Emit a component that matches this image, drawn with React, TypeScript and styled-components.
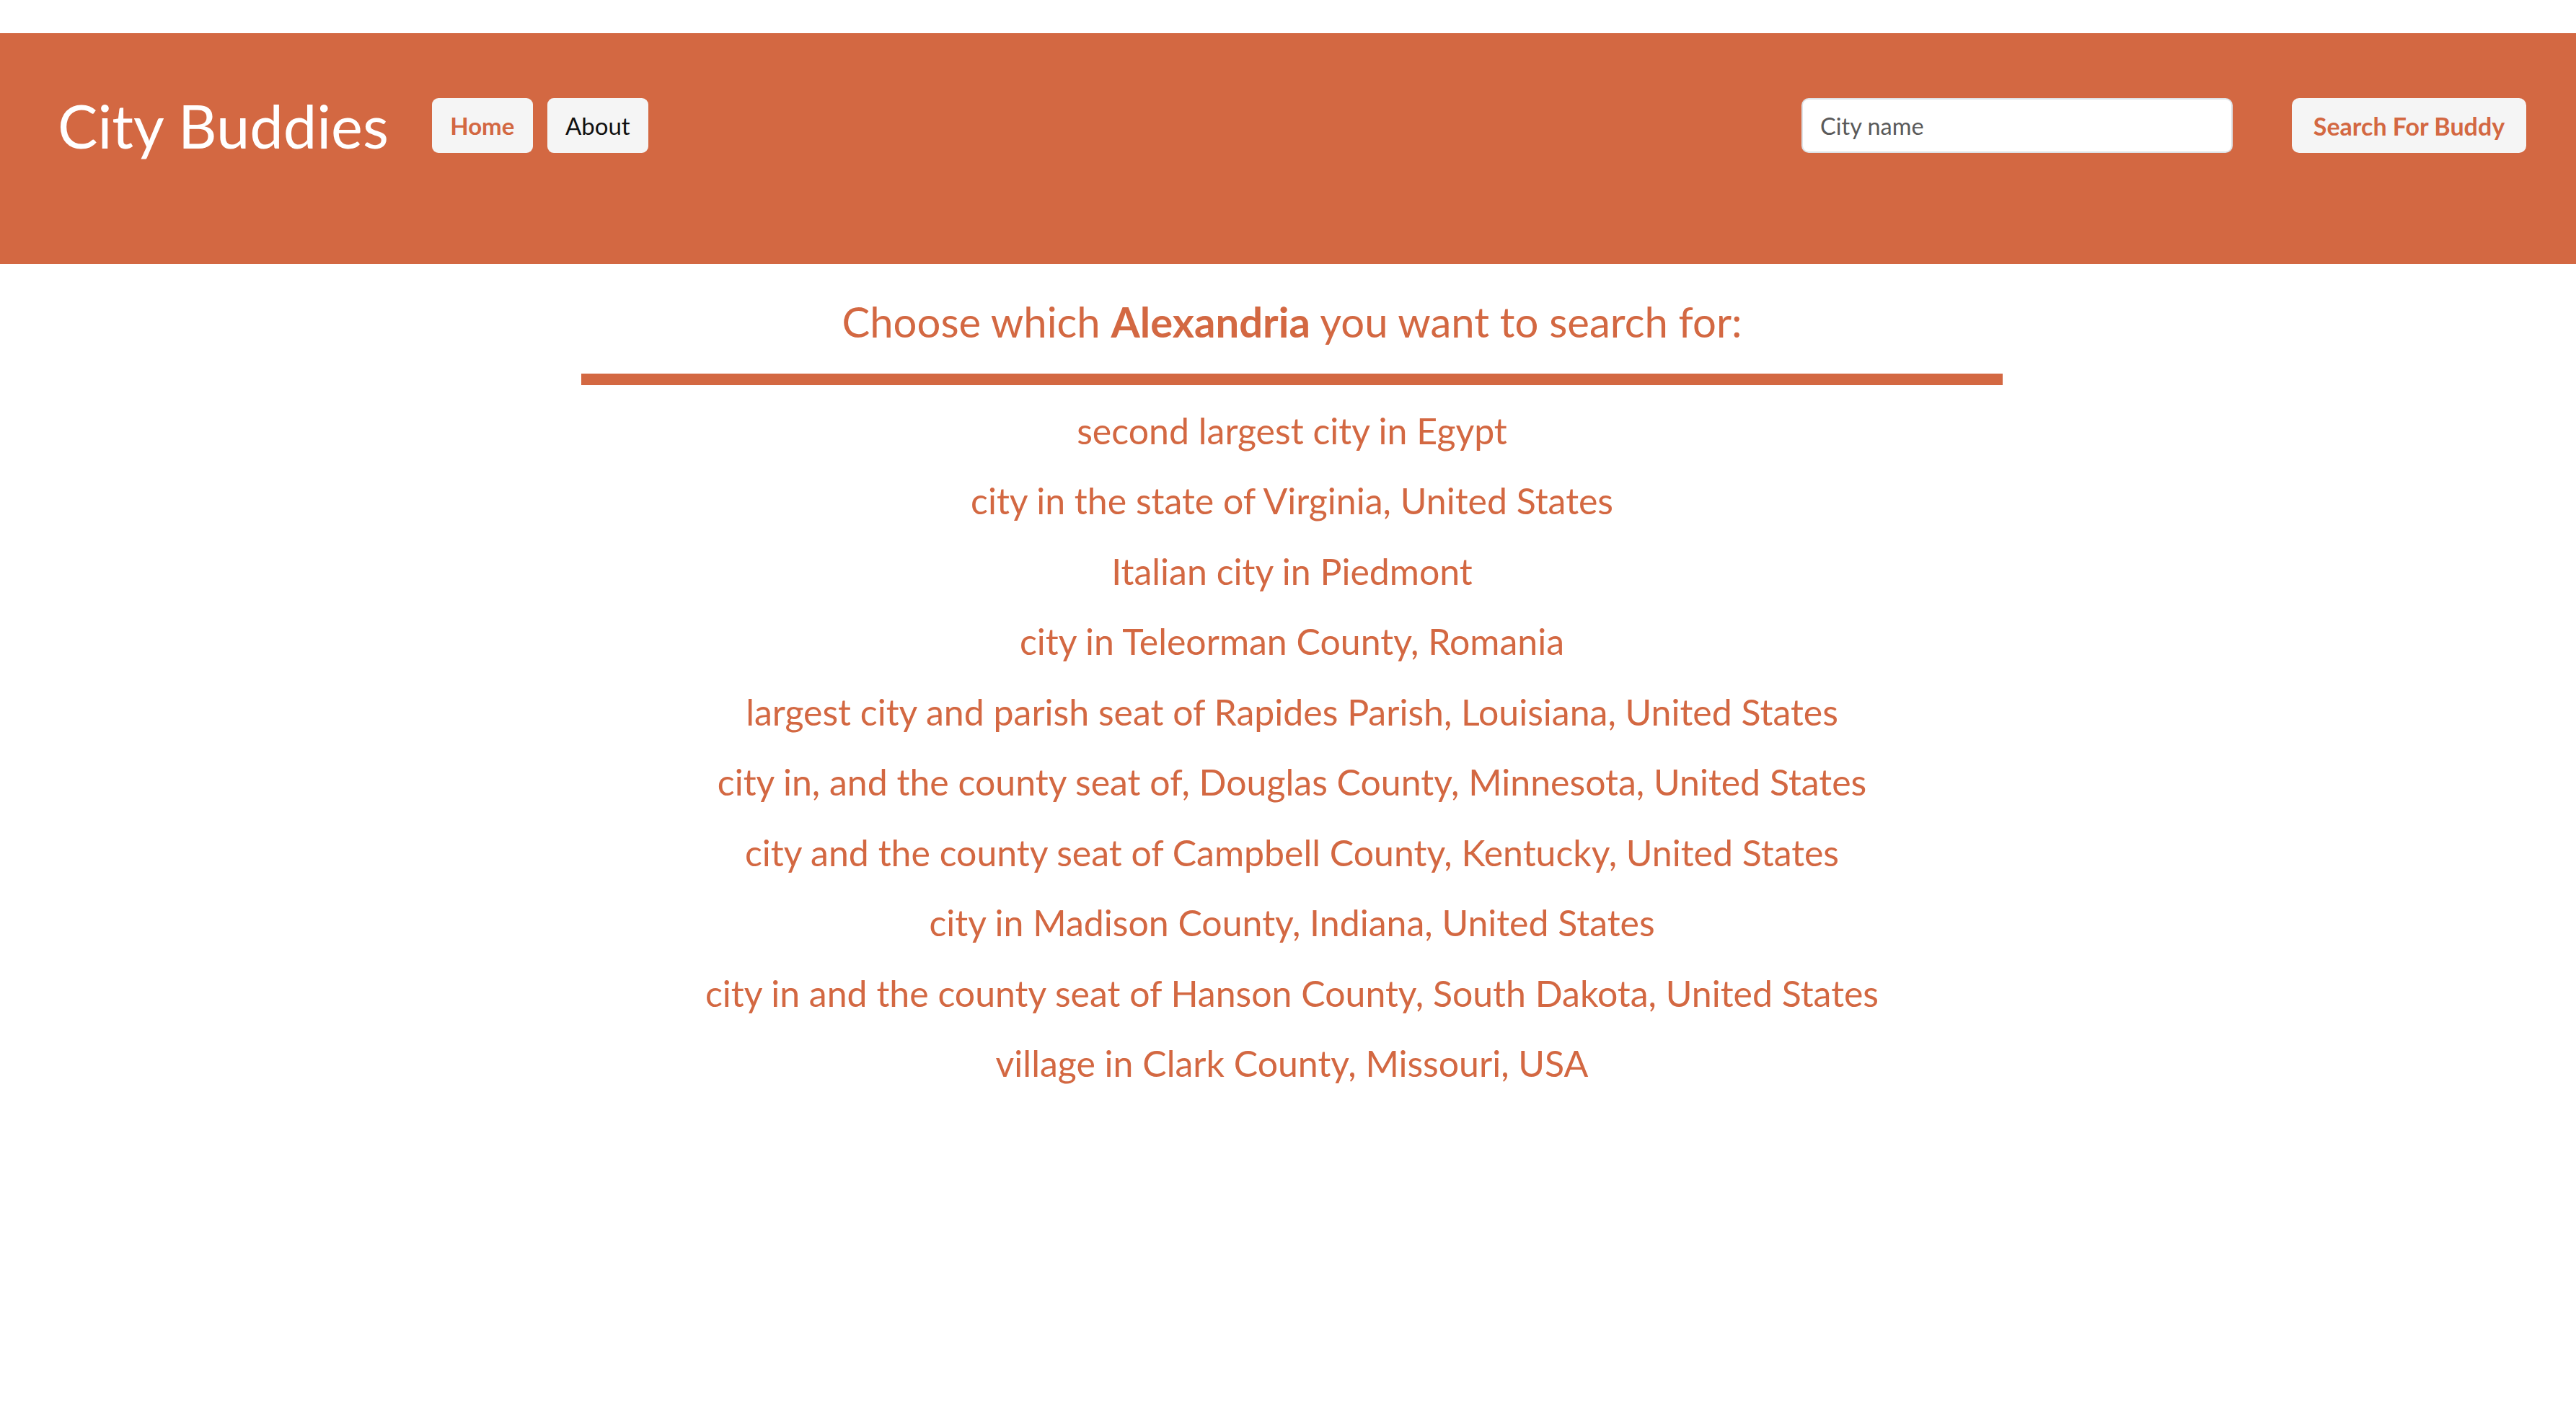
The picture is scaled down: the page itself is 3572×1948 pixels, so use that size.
import styled, { createGlobalStyle } from 'styled-components';

const orange = '#d36842';

const GlobalStyle = createGlobalStyle`
  body {
    margin: 0;
    background: #ffffff;
    font-family: Lato, 'Noto Sans', sans-serif;
  }
`;

const places = [
  'second largest city in Egypt',
  'city in the state of Virginia, United States',
  'Italian city in Piedmont',
  'city in Teleorman County, Romania',
  'largest city and parish seat of Rapides Parish, Louisiana, United States',
  'city in, and the county seat of, Douglas County, Minnesota, United States',
  'city and the county seat of Campbell County, Kentucky, United States',
  'city in Madison County, Indiana, United States',
  'city in and the county seat of Hanson County, South Dakota, United States',
  'village in Clark County, Missouri, USA',
];

const App = () => {
  return (
    <>
      <GlobalStyle />
      <Header>
        <Brand>City Buddies</Brand>
        <NavButton active>Home</NavButton>
        <NavButton>About</NavButton>
        <Spacer />
        <SearchForm onSubmit={(e) => e.preventDefault()}>
          <CityInput placeholder="City name" />
          <SearchButton type="submit">Search For Buddy</SearchButton>
        </SearchForm>
      </Header>
      <Main>
        <Heading>
          Choose which <strong>Alexandria</strong> you want to search for:
        </Heading>
        <Rule />
        <PlaceList>
          {places.map((p) => (
            <Place key={p}>{p}</Place>
          ))}
        </PlaceList>
      </Main>
    </>
  );
};

const Header = styled.header`
  margin-top: 46px;
  height: 320px;
  box-sizing: border-box;
  background-color: ${orange};
  padding: 90px 69px 0 80px;
  display: flex;
  align-items: flex-start;
  gap: 20px;
`;

const Brand = styled.h1`
  margin: 0 40px 0 0;
  height: 76px;
  display: flex;
  align-items: center;
  color: #ffffff;
  font-size: 83px;
  font-weight: 400;
  line-height: 1;
  white-space: nowrap;
`;

const NavButton = styled.button<{ active?: boolean }>`
  height: 76px;
  width: 140px;
  border: none;
  border-radius: 9px;
  background-color: #f5f5f5;
  color: ${({ active }) => (active ? orange : '#111111')};
  font-family: inherit;
  font-size: 33px;
  font-weight: ${({ active }) => (active ? 700 : 400)};
  cursor: pointer;
`;

const Spacer = styled.div`
  flex: 1;
`;

const SearchForm = styled.form`
  display: flex;
  gap: 82px;
`;

const CityInput = styled.input`
  width: 598px;
  height: 76px;
  box-sizing: border-box;
  border: 2px solid #dee2e6;
  border-radius: 10px;
  padding: 0 24px;
  font-family: inherit;
  font-size: 32.5px;
  color: #333333;
  outline: none;
  &::placeholder {
    color: #5a5a5a;
  }
`;

const SearchButton = styled.button`
  width: 325px;
  height: 76px;
  border: none;
  border-radius: 10px;
  background-color: #f5f5f5;
  color: ${orange};
  font-family: inherit;
  font-size: 34px;
  font-weight: 700;
  cursor: pointer;
`;

const Main = styled.main`
  width: 1971px;
  margin: 0 auto;
  padding: 45px 0 0 11px;
  display: flex;
  flex-direction: column;
  align-items: center;
`;

const Heading = styled.h2`
  margin: 0;
  color: ${orange};
  font-size: 58px;
  font-weight: 400;
  line-height: 1.2;
  strong {
    font-weight: 700;
  }
`;

const Rule = styled.div`
  align-self: stretch;
  height: 16px;
  margin-top: 37px;
  background-color: ${orange};
`;

const PlaceList = styled.ul`
  list-style: none;
  margin: 15px 0 0;
  padding: 0;
  text-align: center;
`;

const Place = styled.li`
  color: ${orange};
  font-size: 50px;
  line-height: 97.5px;
  cursor: pointer;
`;

export default App;
